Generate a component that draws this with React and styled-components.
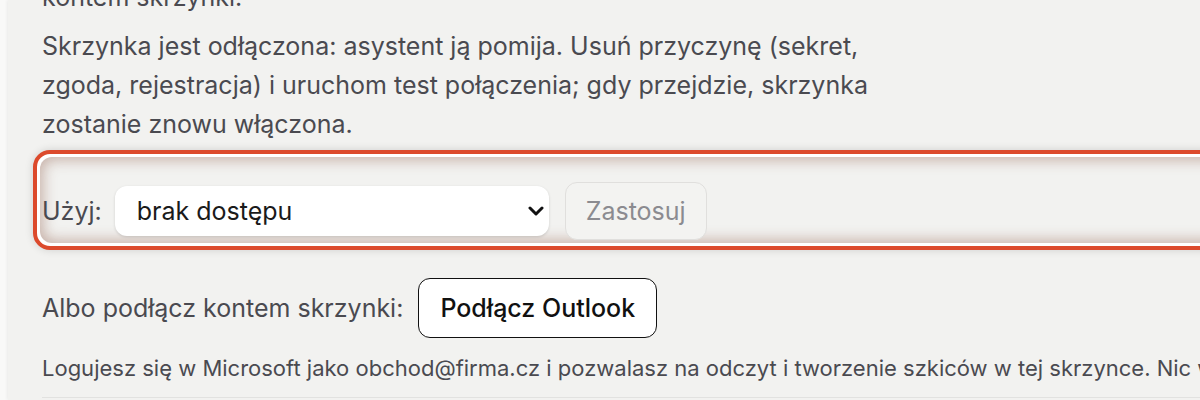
import React from 'react';
import styled, { createGlobalStyle } from 'styled-components';

const GlobalStyle = createGlobalStyle`
  html, body {
    margin: 0;
    background: #f9f9f8;
    font-family: Inter, "Noto Sans", sans-serif;
    -webkit-font-smoothing: antialiased;
  }
`;

const Page = styled.div`
  padding-left: 8px;
  height: 400px;
  overflow: hidden;
`;

const Panel = styled.section`
  background: #f2f2f0;
  box-shadow: -1px 0 3px rgba(0, 0, 0, 0.06);
  height: 400px;
  padding-left: 34px;
  overflow: hidden;
`;

const Content = styled.div`
  margin-top: -22px;
`;

const Text = styled.p`
  margin: 0 0 10px;
  max-width: 850px;
  font-size: 25px;
  line-height: 39px;
  color: #4a4a50;
`;

const Ring = styled.div`
  margin: -4px -40px 0 -9px;
  border: 4px solid #dc4a2c;
  border-radius: 17px;
  background: #fff;
  padding: 3px;
  box-shadow: 0 0 8px rgba(0, 0, 0, 0.14);
`;

const Inner = styled.div`
  display: flex;
  align-items: center;
  gap: 13px;
  border-radius: 12px;
  background: #f2f2f0;
  padding: 25px 0 3px 2px;
  box-shadow: inset 0 0 14px 3px rgba(130, 70, 50, 0.38);
`;

const Label = styled.span`
  font-size: 25px;
  color: #4a4a50;
`;

const SelectWrap = styled.div`
  position: relative;
  width: 434px;
  margin-right: 3px;
`;

const Select = styled.select`
  appearance: none;
  width: 100%;
  height: 50px;
  border: none;
  border-radius: 12px;
  background: #fff;
  box-shadow: 0 1px 3px rgba(0, 0, 0, 0.14);
  padding: 0 40px 0 22px;
  font-family: inherit;
  font-size: 25px;
  color: #1a1a1a;
  outline: none;
`;

const Chevron = styled.svg`
  position: absolute;
  right: 5px;
  top: 50%;
  margin-top: -6px;
  pointer-events: none;
`;

const Button = styled.button`
  height: ${p => p.$h}px;
  padding: 0 ${p => p.$px}px;
  border-radius: 12px;
  font-family: inherit;
  font-size: 25px;
  font-weight: ${p => (p.$primary ? 500 : 400)};
  color: ${p => (p.$primary ? '#111' : '#8b8b90')};
  background: ${p => (p.$primary ? '#fff' : '#f3f3f1')};
  border: ${p => (p.$primary ? '1.5px solid #111' : '1px solid #e0dfdd')};
  cursor: pointer;
`;

const ConnectRow = styled.div`
  display: flex;
  align-items: center;
  gap: 15px;
  margin-top: 28px;
`;

const Note = styled.p`
  margin: 15px 0 0;
  font-size: 22px;
  line-height: 30px;
  color: #4a4a50;
  white-space: nowrap;
`;

const Divider = styled.hr`
  margin: 14px 0 0;
  border: none;
  border-top: 1px solid #e2e2e0;
`;

export default function App() {
  return (
    <Page>
      <GlobalStyle />
      <Panel>
        <Content>
          <Text>kontem skrzynki.</Text>
          <Text>
            Skrzynka jest odłączona: asystent ją pomija. Usuń przyczynę (sekret,
            zgoda, rejestracja) i uruchom test połączenia; gdy przejdzie, skrzynka
            zostanie znowu włączona.
          </Text>
          <Ring>
            <Inner>
              <Label>Użyj:</Label>
              <SelectWrap>
                <Select defaultValue="none">
                  <option value="none">brak dostępu</option>
                </Select>
                <Chevron width="16" height="12" viewBox="0 0 16 12">
                  <path d="M2 3l6 6 6-6" fill="none" stroke="#111" strokeWidth="3" strokeLinecap="round" strokeLinejoin="round" />
                </Chevron>
              </SelectWrap>
              <Button $h={58} $px={20} disabled>Zastosuj</Button>
            </Inner>
          </Ring>
          <ConnectRow>
            <Label>Albo podłącz kontem skrzynki:</Label>
            <Button $primary $h={60} $px={21}>Podłącz Outlook</Button>
          </ConnectRow>
          <Note>
            Logujesz się w Microsoft jako obchod@firma.cz i pozwalasz na odczyt i tworzenie szkiców w tej skrzynce. Nic więcej nie zostanie zmienione.
          </Note>
          <Divider />
        </Content>
      </Panel>
    </Page>
  );
}
